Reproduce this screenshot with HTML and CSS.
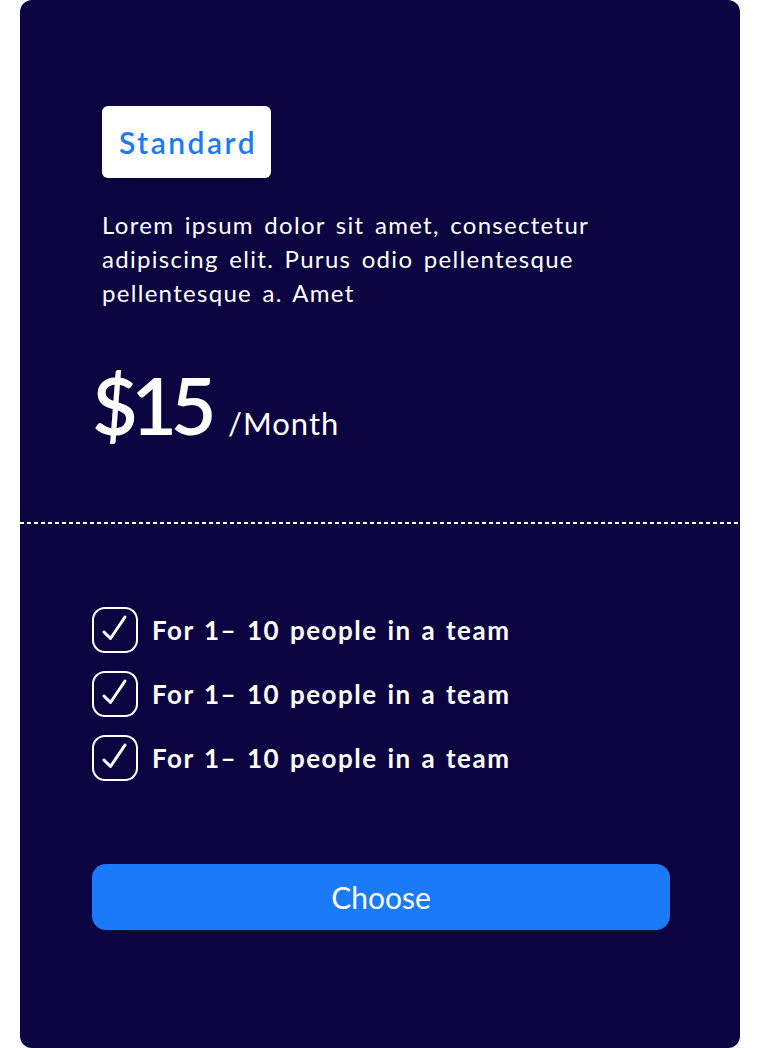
FILE: index.html
```html
<!DOCTYPE html>
<html lang="en">

<head>
    <meta charset="UTF-8">
    <meta name="viewport" content="width=device-width, initial-scale=1.0">
    <title>Pricing - Standard</title>
    <link rel="stylesheet" href="styles.css">
</head>

<body>

    <div class="card">
        <div class="card-top">
            <div class="badge">Standard</div>
            <p class="description">Lorem ipsum dolor sit amet, consectetur adipiscing elit. Purus odio pellentesque pellentesque a. Amet</p>
            <div class="price">
                <span class="amount">$15</span>
                <span class="period">/Month</span>
            </div>
        </div>

        <div class="divider"></div>

        <div class="card-bottom">
            <ul class="features">
                <li>
                    <svg class="check" width="46" height="46" viewBox="0 0 46 46">
                        <rect x="1" y="1" width="44" height="44" rx="12" fill="none" stroke="#fff" stroke-width="2" />
                        <path d="M12 25 L18.5 31.5 L33 10" fill="none" stroke="#fff" stroke-width="3" stroke-linecap="round" stroke-linejoin="round" />
                    </svg>
                    <span>For 1&ndash; 10 people in a team</span>
                </li>
                <li>
                    <svg class="check" width="46" height="46" viewBox="0 0 46 46">
                        <rect x="1" y="1" width="44" height="44" rx="12" fill="none" stroke="#fff" stroke-width="2" />
                        <path d="M12 25 L18.5 31.5 L33 10" fill="none" stroke="#fff" stroke-width="3" stroke-linecap="round" stroke-linejoin="round" />
                    </svg>
                    <span>For 1&ndash; 10 people in a team</span>
                </li>
                <li>
                    <svg class="check" width="46" height="46" viewBox="0 0 46 46">
                        <rect x="1" y="1" width="44" height="44" rx="12" fill="none" stroke="#fff" stroke-width="2" />
                        <path d="M12 25 L18.5 31.5 L33 10" fill="none" stroke="#fff" stroke-width="3" stroke-linecap="round" stroke-linejoin="round" />
                    </svg>
                    <span>For 1&ndash; 10 people in a team</span>
                </li>
            </ul>
            <button class="choose-btn">Choose</button>
        </div>
    </div>

</body>

</html>
```

FILE: styles.css
```css
/* Basic Reset */
* {
    margin: 0;
    padding: 0;
    box-sizing: border-box;
}

body {
    font-family: 'Lato', 'Open Sans', sans-serif;
    background-color: #fff;
}

/* Card */
.card {
    width: 720px;
    height: 1048px;
    margin: 0 20px;
    background-color: #0b0440;
    border-radius: 12px;
    color: #fff;
}

.card-top {
    height: 522px;
    padding: 106px 82px 0;
}

.badge {
    display: inline-block;
    height: 72px;
    padding: 0 14px 0 17px;
    background-color: #fff;
    border-radius: 6px;
    color: #1a7af8;
    font-size: 30px;
    font-weight: 600;
    letter-spacing: 2.5px;
    line-height: 72px;
}

.description {
    margin-top: 30px;
    font-size: 24px;
    line-height: 34px;
    letter-spacing: 1.3px;
    word-spacing: 3px;
}

.price {
    display: flex;
    align-items: baseline;
    gap: 18px;
    margin-top: 55px;
    margin-left: -10px;
}

.amount {
    font-size: 79px;
    font-weight: 600;
    letter-spacing: -6.5px;
    line-height: 1;
}

.period {
    font-size: 31px;
    letter-spacing: 1px;
}

/* Dashed divider */
.divider {
    height: 2px;
    background: repeating-linear-gradient(to right, #fff 0 4px, transparent 4px 7px);
}

.card-bottom {
    padding: 83px 70px 0 72px;
}

.features {
    list-style: none;
    display: flex;
    flex-direction: column;
    gap: 18px;
}

.features li {
    display: flex;
    align-items: center;
    gap: 14px;
    font-size: 26px;
    font-weight: 700;
    letter-spacing: 1.5px;
    word-spacing: 2px;
}

.check {
    flex-shrink: 0;
}

.choose-btn {
    display: block;
    width: 100%;
    height: 66px;
    margin-top: 83px;
    background-color: #1a7af8;
    color: #fff;
    font-family: inherit;
    font-size: 30px;
    border: none;
    border-radius: 14px;
    cursor: pointer;
}
```
